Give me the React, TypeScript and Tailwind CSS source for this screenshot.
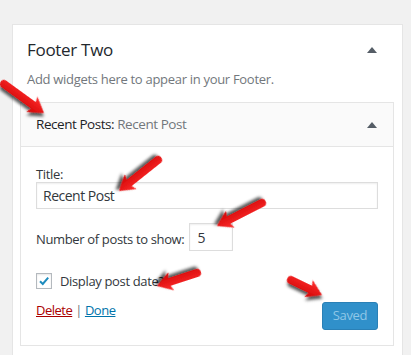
import React from 'react';

type Pt = [number, number];

const arrows: { from: Pt; to: Pt }[] = [
  { from: [4, 84], to: [44, 113] },
  { from: [158, 160], to: [119, 191] },
  { from: [262, 203], to: [217, 226] },
  { from: [197, 273], to: [157, 286] },
  { from: [291, 280], to: [322, 295] },
];

function Arrow({ from, to }: { from: Pt; to: Pt }) {
  const dx = to[0] - from[0];
  const dy = to[1] - from[1];
  const len = Math.sqrt(dx * dx + dy * dy);
  const angle = (Math.atan2(dy, dx) * 180) / Math.PI;
  const d = `M 0 -4 L ${len - 13} -4 L ${len - 15} -9.5 L ${len} 0 L ${len - 15} 9.5 L ${len - 13} 4 L 0 4 A 4 4 0 0 1 0 -4 Z`;
  return (
    <g transform={`translate(${from[0]} ${from[1]}) rotate(${angle})`}>
      <path d={d} fill="url(#red)" filter="url(#shadow)" />
    </g>
  );
}

function Caret() {
  return <span className="block w-0 h-0 border-l-[5px] border-r-[5px] border-b-[6px] border-l-transparent border-r-transparent border-b-[#555d66]" />;
}

export default function App() {
  return (
    <div
      className="relative w-[411px] h-[355px] overflow-hidden bg-[#f1f1f1] pt-[24px] pl-[12px] text-[#32373c] tracking-[-0.35px]"
      style={{ fontFamily: '"Open Sans", "Noto Sans", sans-serif' }}
    >
      <div className="w-[391px] border border-[#e5e5e5] bg-white pb-[10px]">
        <div className="flex items-center justify-between pl-[14px] pr-[25px] pt-[12px]">
          <h2 className="text-[17px] leading-[26px] tracking-[-0.3px] text-[#23282d]">Footer Two</h2>
          <Caret />
        </div>
        <p className="mt-[7px] pl-[14px] text-[13px] leading-[18px] tracking-[-0.3px] text-[#72777c]">
          Add widgets here to appear in your Footer.
        </p>

        <div className="ml-[7px] mt-[14px] w-[374px] border border-[#e5e5e5] bg-white">
          <div className="flex h-[44px] items-center justify-between border-b border-[#e5e5e5] bg-[#fafafa] pl-[15px] pr-[16px]">
            <h3 className="text-[13.5px] font-medium tracking-[-0.45px] text-[#1d2327]">
              Recent Posts: <span className="font-normal text-[#72777c]">Recent Post</span>
            </h3>
            <Caret />
          </div>

          <div className="px-[15px] pt-[19px] pb-[15px] text-[13px]">
            <label className="block leading-[16px]">Title:</label>
            <div className="flex h-[27px] w-[342px] items-center border border-[#ddd] px-[6px] text-[14px] tracking-[-0.5px] text-[#32373c] shadow-[inset_0_1px_2px_rgba(0,0,0,0.07)]">
              Recent Post
            </div>

            <div className="mt-[14px] flex items-center">
              <span className="mt-[4px] leading-[18px] tracking-[-0.35px]">Number of posts to show:</span>
              <div className="ml-[5px] flex h-[28px] w-[44px] items-center border border-[#ddd] px-[7px] text-[14px] shadow-[inset_0_1px_2px_rgba(0,0,0,0.07)]">
                5
              </div>
            </div>

            <div className="mt-[21px] flex items-center">
              <span className="flex h-[16px] w-[16px] items-center justify-center border border-[#b4b9be] bg-white shadow-[inset_0_1px_2px_rgba(0,0,0,0.1)]">
                <svg width="12" height="12" viewBox="0 0 12 12">
                  <path d="M2 6.2 L4.8 9 L10.2 2.6" fill="none" stroke="#1e8cbe" strokeWidth="2" />
                </svg>
              </span>
              <span className="ml-[8px] leading-[18px]">Display post date?</span>
            </div>

            <div className="mt-[12px] flex items-start justify-between">
              <div className="leading-[16px] tracking-[-0.5px]">
                <a className="text-[#a00] underline">Delete</a>
                <span className="mx-[3px] text-[#72777c]">|</span>
                <a className="text-[#0073aa] underline">Done</a>
              </div>
              <button className="h-[28px] w-[56px] rounded-[3px] border border-[#2a80b6] bg-[#3090ca] text-[13px] text-[#8fc7e7]">
                Saved
              </button>
            </div>
          </div>
        </div>
      </div>

      <svg className="pointer-events-none absolute left-0 top-0" width="411" height="355">
        <defs>
          <linearGradient id="red" x1="0" y1="0" x2="0" y2="1">
            <stop offset="0" stopColor="#ff3030" />
            <stop offset="1" stopColor="#d00000" />
          </linearGradient>
          <filter id="shadow" x="-30%" y="-30%" width="160%" height="180%">
            <feDropShadow dx="2" dy="3" stdDeviation="1.6" floodColor="#000" floodOpacity="0.65" />
          </filter>
        </defs>
        {arrows.map((a, i) => (
          <Arrow key={i} from={a.from} to={a.to} />
        ))}
      </svg>
    </div>
  );
}
